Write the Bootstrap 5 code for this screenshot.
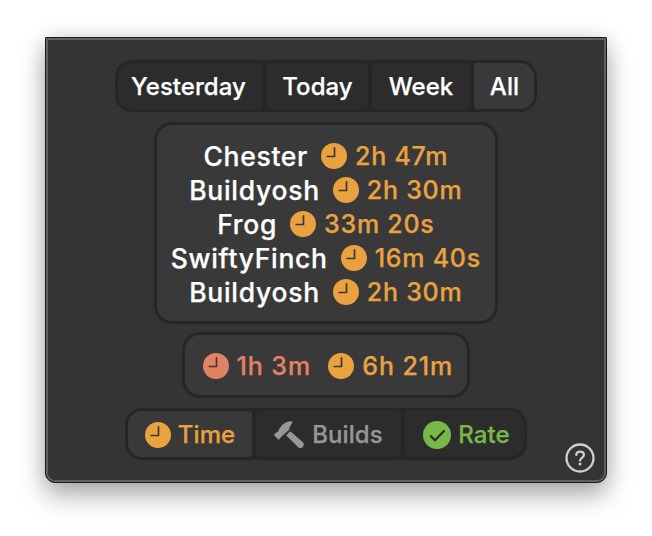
<!DOCTYPE html>
<html lang="en">
<head>
<meta charset="utf-8">
<meta name="viewport" content="width=device-width, initial-scale=1">
<title>Build time</title>
<link href="https://cdn.jsdelivr.net/npm/bootstrap@5.3.0/dist/css/bootstrap.min.css" rel="stylesheet">
<style>
body{width:652px;height:536px;overflow:hidden;background:#fff;font-family:Inter,"Liberation Sans",sans-serif;font-weight:500;color:#fff;line-height:1;padding:37px 0 0 45px;-webkit-text-stroke:.25px currentColor}
.popover-window{width:562px;height:446px;background:#343432;border:1px solid #1b1b1b;border-radius:1px 1px 10px 10px;box-shadow:inset 0 0 0 2px #616161,0 13px 26px rgba(0,0,0,.3),0 0 20px rgba(0,0,0,.13);padding-top:22px}
.seg{height:52px;border:3px solid #262626;border-radius:17px;background:#262626;gap:4px;font-size:24px;letter-spacing:.05px}
.seg button{background:#2c2c2c;color:#fff;border:0;padding:2px 0 0;font-weight:500;letter-spacing:inherit;border-radius:4px;-webkit-text-stroke:inherit}
.seg button:first-child{border-radius:14px 3px 3px 14px}
.seg button:last-child{border-radius:3px 14px 14px 3px}
.seg button.active{background:#393939}
.seg svg{margin-top:-1px}
.seg-range{width:422px}
.seg-kind{width:402px;margin-top:10px}
.panel{background:#393939;border:3px solid #262626}
.projects{width:344px;height:202px;margin-top:10px;border-radius:18px;padding:13px 1px 0 0}
.entry{height:34px}
.pname,.ptime{padding-top:2px}
.pname{font-size:26.5px;letter-spacing:.7px;margin-right:13px}
.ptime{font-size:25px;letter-spacing:.75px;margin-right:-.7px}
.totals{width:288px;height:66px;margin-top:8px;border-radius:18px;gap:18px;padding-left:3px}
.totals .ptime{letter-spacing:.9px}
.c-orange{color:#e9a23f!important}.c-red{color:#e38263!important}.c-gray{color:#979797!important}.c-green{color:#78b848!important}
.clock{width:26px;height:26px;margin-right:8px;flex:none}
.entry .clock,.totals .clock{margin-top:1px}
.help{right:56px;top:442px;width:32px;height:32px}
</style>
<script src="https://cdn.jsdelivr.net/npm/bootstrap@5.3.0/dist/js/bootstrap.bundle.min.js"></script>
</head>
<body>
<svg class="d-none"><symbol id="clock" viewBox="0 0 26 26"><circle cx="13" cy="13" r="13" fill="currentColor"/><path d="M13.5 4.8V13.5H6.3" fill="none" stroke="#393939" stroke-width="1.7" stroke-linecap="round" stroke-linejoin="round"/></symbol></svg>
<main class="popover-window d-flex flex-column align-items-center">
<div class="seg seg-range d-flex">
<button style="width:145px;padding-right:4px">Yesterday</button><button style="width:101px">Today</button><button style="width:98px">Week</button><button class="active flex-fill" style="padding-left:1px">All</button>
</div>
<section class="panel projects d-flex flex-column">
<div class="entry d-flex align-items-center justify-content-center"><span class="pname">Chester</span><svg class="clock c-orange"><use href="#clock"/></svg><span class="ptime c-orange">2h 47m</span></div>
<div class="entry d-flex align-items-center justify-content-center"><span class="pname">Buildyosh</span><svg class="clock c-orange"><use href="#clock"/></svg><span class="ptime c-orange">2h 30m</span></div>
<div class="entry d-flex align-items-center justify-content-center"><span class="pname">Frog</span><svg class="clock c-orange"><use href="#clock"/></svg><span class="ptime c-orange">33m 20s</span></div>
<div class="entry d-flex align-items-center justify-content-center"><span class="pname">SwiftyFinch</span><svg class="clock c-orange"><use href="#clock"/></svg><span class="ptime c-orange">16m 40s</span></div>
<div class="entry d-flex align-items-center justify-content-center"><span class="pname">Buildyosh</span><svg class="clock c-orange"><use href="#clock"/></svg><span class="ptime c-orange">2h 30m</span></div>
</section>
<section class="panel totals d-flex align-items-center justify-content-center">
<div class="d-flex align-items-center c-red"><svg class="clock"><use href="#clock"/></svg><span class="ptime">1h 3m</span></div>
<div class="d-flex align-items-center c-orange"><svg class="clock"><use href="#clock"/></svg><span class="ptime">6h 21m</span></div>
</section>
<div class="seg seg-kind d-flex">
<button class="active c-orange d-flex align-items-center justify-content-center" style="width:124px"><svg class="clock" style="margin-right:7px"><use href="#clock"/></svg>Time</button>
<button class="c-gray d-flex align-items-center justify-content-center" style="width:145px"><svg style="margin-right:7px" width="31" height="28" viewBox="0 0 31 28"><g fill="currentColor"><path d="M.2 13.4L3.2 10.8 3.8 11.1Q5 7.200 8.400 3.800 12 .3 17.600 .2 18.600.4 18.200 1.500L15.200 7.200 15.500 8.600 7.300 15.800 6.900 15.600 7.100 16.300 4.900 18.600Q4.500 18.900 4.200 18.500L.2 14.300Q-.1 13.800.2 13.400Z"/><path d="M12.400 14L15.800 10.800Q16.500 10.200 17.200 10.900L29 21.200Q30.900 23.200 29.300 25.500 27.100 28 24.500 26.600L12.800 15Q12.100 14.500 12.400 14Z"/></g></svg>Builds</button>
<button class="c-green d-flex align-items-center justify-content-center flex-fill" style="padding-left:4px"><svg style="margin-right:7px" width="28" height="28" viewBox="0 0 28 28"><circle cx="14" cy="14" r="14" fill="currentColor"/><path d="M7.800 15.200L12 19.300 21 10" fill="none" stroke="#2c2c2c" stroke-width="2.300" stroke-linecap="round" stroke-linejoin="round"/></svg>Rate</button>
</div>
</main>
<svg class="help position-absolute" viewBox="0 0 32 32"><circle cx="16" cy="16" r="13.500" fill="none" stroke="#d0d0d0" stroke-width="2.300"/><path d="M12.300 12.900C12.300 10.700 13.800 9.700 16 9.700S19.900 11 19.900 13C19.900 15.500 16.100 15.700 16.100 18.600" fill="none" stroke="#d0d0d0" stroke-width="2.200" stroke-linecap="round"/><circle cx="16" cy="22.100" r="1.500" fill="#d0d0d0"/></svg>
</body>
</html>
